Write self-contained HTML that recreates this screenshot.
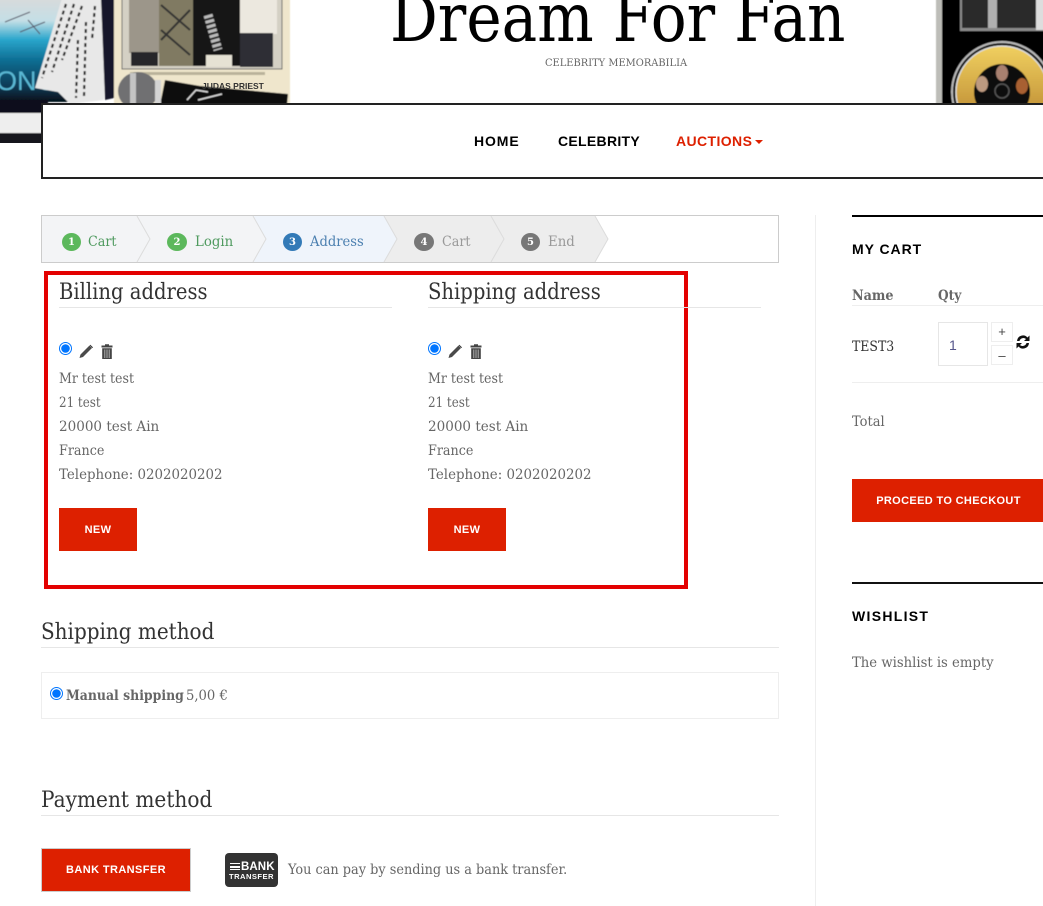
<!DOCTYPE html>
<html><head><meta charset="utf-8"><style>
html,body{margin:0;padding:0;background:#fff;}
#p{position:relative;width:1043px;height:906px;overflow:hidden;font-family:"DejaVu Serif","Liberation Serif",serif;color:#666;font-size:14px;}
.t{position:absolute;white-space:nowrap;line-height:24px;height:24px;transform:scaleX(.92);transform-origin:0 50%;margin-top:1px;}
.h{font-size:22px;color:#333;line-height:30px;height:30px;transform:scaleX(.89);margin-top:2px;}
.bd{font-weight:bold;transform:scaleX(.89);}
.s{font-family:"Liberation Sans",sans-serif;font-weight:bold;color:#000;transform:none;margin-top:0;}
.b{position:absolute;background:#dd2000;color:#fff;font:bold 11px "Liberation Sans",sans-serif;text-align:center;letter-spacing:.4px;}
.l{position:absolute;height:1px;background:#e6e6e6;}
.r{position:absolute;width:13px;height:13px;}
.c{position:absolute;border-radius:50%;width:19px;height:18px;color:#fff;font-size:10px;font-weight:bold;line-height:20px;text-align:center;}
</style></head><body><div id="p">

<svg style="position:absolute;left:0;top:0" width="1043" height="180" viewBox="0 0 1043 180">
<defs>
<linearGradient id="bl" x1="0" y1="0" x2="0" y2="1"><stop offset="0" stop-color="#d8dadb"/><stop offset=".22" stop-color="#c4dfe6"/><stop offset=".4" stop-color="#2aa6cc"/><stop offset=".6" stop-color="#0e6e93"/><stop offset=".85" stop-color="#0a3a55"/><stop offset="1" stop-color="#06101a"/></linearGradient>
<linearGradient id="gd" x1="0" y1="0" x2="0" y2="1"><stop offset="0" stop-color="#f0d060"/><stop offset="1" stop-color="#b07a28"/></linearGradient>
<filter id="bf" x="-5%" y="-5%" width="110%" height="110%"><feGaussianBlur stdDeviation=".6"/></filter>
<clipPath id="cl"><path d="M0 0 H1043 V103 H41 V143 H0 Z"/></clipPath>
</defs>
<g clip-path="url(#cl)"><g filter="url(#bf)">
<rect x="-2" y="-2" width="72" height="104" fill="url(#bl)"/>
<rect x="-2" y="100" width="50" height="14" fill="#08101a"/>
<rect x="-2" y="113" width="46" height="20" fill="#eeeeee"/>
<rect x="-2" y="133" width="46" height="14" fill="#14141c"/>
<path d="M5 22 L30 12 M20 32 L45 22 M28 20 L40 34" stroke="#556" stroke-width="1" fill="none"/>
<text x="-4" y="90" font-family="Liberation Sans,sans-serif" font-size="27" fill="#5ab8d4">ONCE</text>
<polygon points="62,-2 112,-2 104,100 70,104 58,92 35,88" fill="#e8e8e8"/>
<g stroke="#222" stroke-width="2.2" stroke-dasharray="4 3" fill="none">
<path d="M66 4 L42 78"/><path d="M74 4 L52 72"/><path d="M82 6 L62 60"/><path d="M78 40 L76 98"/><path d="M86 22 L84 96"/><path d="M95 6 L92 40"/></g>
<polygon points="101,-2 115,-2 114,98 105,100" fill="#14162a"/>
<rect x="114" y="-2" width="176" height="107" fill="#efe6cc"/>
<rect x="122" y="-2" width="160" height="71" fill="#d4d0c4" stroke="#666" stroke-width="1"/>
<rect x="129" y="-2" width="31" height="55" fill="#9c968a"/>
<rect x="131" y="52" width="27" height="14" fill="#26262a"/>
<rect x="159" y="-2" width="34" height="68" fill="#807a62"/>
<path d="M161 5 L190 30 M161 30 L190 55 M190 10 L161 40" stroke="#333" stroke-width="2"/>
<rect x="193" y="-2" width="47" height="68" fill="#121212"/>
<path d="M208 15 L218 50" stroke="#bbb" stroke-width="9" stroke-dasharray="3 2"/>
<rect x="240" y="-2" width="37" height="36" fill="#ece8df"/>
<rect x="240" y="33" width="33" height="34" fill="#2e2e34"/>
<rect x="206" y="55" width="26" height="12" fill="#e6e2d4"/>
<rect x="130" y="72" width="135" height="3" fill="#b9b29a"/>
<polygon points="165,80 200,86 288,94 287,105 160,105" fill="#111"/>
<ellipse cx="138" cy="91" rx="20" ry="19" fill="#6f6f72"/>
<rect x="130" y="73" width="6" height="32" fill="#c4c4c4"/>
<rect x="155" y="80" width="6" height="25" fill="#d4d4d4"/>
<path d="M187 100 L196 90 L208 92 M198 100 L222 94" stroke="#ddd" stroke-width="1.5" fill="none"/>
<rect x="936" y="-2" width="110" height="107" fill="#060606"/>
<rect x="936" y="-2" width="6" height="107" fill="#bdbdb8"/>
<rect x="960" y="-2" width="85" height="33" fill="#8a8a8a"/>
<rect x="962" y="-2" width="83" height="30" fill="#2a2a2a"/>
<rect x="988" y="-2" width="9" height="30" fill="#b0b0b0"/>
<rect x="1036" y="-2" width="9" height="32" fill="#ddd"/>
<circle cx="1002" cy="92" r="50" fill="#0a0a0a" stroke="#bbb" stroke-width="2"/>
<circle cx="1002" cy="92" r="46" fill="url(#gd)" stroke="#ddd" stroke-width="1.5"/>
<circle cx="1002" cy="92" r="28" fill="#0b0a0a"/>
<ellipse cx="1002" cy="73" rx="6" ry="8" fill="#a88070"/>
<ellipse cx="982" cy="84" rx="6" ry="8" fill="#bd9a80"/>
<ellipse cx="1022" cy="86" rx="6" ry="8" fill="#a86030"/>
<circle cx="1002" cy="91" r="7" fill="none" stroke="#555" stroke-width="1.5"/>
</g></g>
<text x="202" y="89" font-family="Liberation Sans,sans-serif" font-weight="bold" font-size="8.5" fill="#333">JUDAS PRIEST</text>
</svg>

<div class="t" style="left:390px;top:-28px;font-size:67px;line-height:90px;height:90px;color:#000;transform:scaleX(.89)">Dream For Fan</div>
<div class="t" style="left:545px;top:50px;font-size:10.5px;color:#666;transform:scaleX(.94)">CELEBRITY MEMORABILIA</div>

<div style="position:absolute;left:41px;top:103px;width:1100px;height:72px;border:2px solid #222;background:#fff;"></div>
<div class="t s" style="left:474px;top:129px;font-size:14px;letter-spacing:.9px">HOME</div>
<div class="t s" style="left:558px;top:129px;font-size:14px;letter-spacing:.3px">CELEBRITY</div>
<div class="t s" style="left:676px;top:129px;font-size:14px;color:#dd2000;letter-spacing:.4px">AUCTIONS</div>
<div style="position:absolute;left:755px;top:140px;border-left:4px solid transparent;border-right:4px solid transparent;border-top:4px solid #dd2000;"></div>

<svg style="position:absolute;left:41px;top:215px" width="739" height="48" viewBox="41 215 739 48">
<rect x="41.5" y="215.5" width="737" height="47" fill="#fff" stroke="#ccc"/>
<polygon points="491,216 595,216 608,239 595,262 491,262" fill="#ededed"/>
<polygon points="384,216 491,216 504,239 491,262 384,262" fill="#ededed"/>
<polygon points="253,216 384,216 397,239 384,262 253,262" fill="#eff4fb"/>
<polygon points="137,216 253,216 266,239 253,262 137,262" fill="#f3f4f6"/>
<polygon points="42,216 137,216 150,239 137,262 42,262" fill="#f3f4f6"/>
<path d="M137 216 L150 239 L137 262 M253 216 L266 239 L253 262 M384 216 L397 239 L384 262 M491 216 L504 239 L491 262 M595 216 L608 239 L595 262" fill="none" stroke="#dcdcdc"/>
</svg>
<div class="c" style="left:62px;top:233px;background:#5cb85c">1</div><div class="t" style="left:88px;top:229px;color:#4f9a5f;transform:scaleX(.91)">Cart</div>
<div class="c" style="left:167px;top:233px;width:20px;background:#5cb85c">2</div><div class="t" style="left:195px;top:229px;color:#4f9a5f;transform:scaleX(.95)">Login</div>
<div class="c" style="left:283px;top:233px;background:#337ab7">3</div><div class="t" style="left:310px;top:229px;color:#4c80b0;transform:scaleX(.936)">Address</div>
<div class="c" style="left:414px;top:233px;width:20px;background:#777">4</div><div class="t" style="left:442px;top:229px;color:#999;transform:scaleX(.91)">Cart</div>
<div class="c" style="left:521px;top:233px;background:#777">5</div><div class="t" style="left:548px;top:229px;color:#999;transform:scaleX(.95)">End</div>

<div style="position:absolute;left:44px;top:271px;width:636px;height:310px;border:4px solid #e30000;"></div>

<div class="t h" style="left:59px;top:276px">Billing address</div>
<div class="l" style="left:59px;top:307px;width:333px"></div>
<div class="t h" style="left:428px;top:276px">Shipping address</div>
<div class="l" style="left:428px;top:307px;width:333px"></div>

<svg class="r" style="left:59px;top:342px" viewBox="0 0 13 13"><circle cx="6.5" cy="6.5" r="6" fill="#fff" stroke="#0075ff" stroke-width="1"/><circle cx="6.5" cy="6.5" r="4.3" fill="#0075ff"/></svg>
<svg style="position:absolute;left:79px;top:344px" width="15" height="15" viewBox="0 0 15 15"><path d="M.5 14 L1.5 10.5 L10.5 1.5 L13 4 L4 13 Z" fill="#4a4a4a"/><path d="M11.3 .7 L14 3.4 L13.4 4 L10.7 1.3 Z" fill="#222"/></svg>
<svg style="position:absolute;left:101px;top:344px" width="12" height="15" viewBox="0 0 12 15"><path d="M4 1.5 V.3 H8 V1.5 H11.5 V3.5 H.5 V1.5 Z M1.2 4.3 H10.8 V15 H1.2 Z" fill="#444"/><path d="M3.8 5.5 V14 M6 5.5 V14 M8.2 5.5 V14" stroke="#bbb" stroke-width=".9"/></svg>
<svg class="r" style="left:428px;top:342px" viewBox="0 0 13 13"><circle cx="6.5" cy="6.5" r="6" fill="#fff" stroke="#0075ff" stroke-width="1"/><circle cx="6.5" cy="6.5" r="4.3" fill="#0075ff"/></svg>
<svg style="position:absolute;left:448px;top:344px" width="15" height="15" viewBox="0 0 15 15"><path d="M.5 14 L1.5 10.5 L10.5 1.5 L13 4 L4 13 Z" fill="#4a4a4a"/><path d="M11.3 .7 L14 3.4 L13.4 4 L10.7 1.3 Z" fill="#222"/></svg>
<svg style="position:absolute;left:470px;top:344px" width="12" height="15" viewBox="0 0 12 15"><path d="M4 1.5 V.3 H8 V1.5 H11.5 V3.5 H.5 V1.5 Z M1.2 4.3 H10.8 V15 H1.2 Z" fill="#444"/><path d="M3.8 5.5 V14 M6 5.5 V14 M8.2 5.5 V14" stroke="#bbb" stroke-width=".9"/></svg>

<div class="t" style="left:59px;top:366px;transform:scaleX(.9)">Mr test test</div>
<div class="t" style="left:59px;top:390px;transform:scaleX(.85)">21 test</div>
<div class="t" style="left:59px;top:414px;transform:scaleX(.966)">20000 test Ain</div>
<div class="t" style="left:59px;top:438px;transform:scaleX(.91)">France</div>
<div class="t" style="left:59px;top:462px;transform:scaleX(.955)">Telephone: 0202020202</div>
<div class="t" style="left:428px;top:366px;transform:scaleX(.9)">Mr test test</div>
<div class="t" style="left:428px;top:390px;transform:scaleX(.85)">21 test</div>
<div class="t" style="left:428px;top:414px;transform:scaleX(.966)">20000 test Ain</div>
<div class="t" style="left:428px;top:438px;transform:scaleX(.91)">France</div>
<div class="t" style="left:428px;top:462px;transform:scaleX(.955)">Telephone: 0202020202</div>

<div class="b" style="left:59px;top:508px;width:78px;height:43px;line-height:44px">NEW</div>
<div class="b" style="left:428px;top:508px;width:78px;height:43px;line-height:44px">NEW</div>

<div class="t h" style="left:41px;top:616px;transform:scaleX(.908)">Shipping method</div>
<div class="l" style="left:41px;top:647px;width:738px"></div>
<div style="position:absolute;left:41px;top:672px;width:736px;height:45px;border:1px solid #eee"></div>
<svg class="r" style="left:50px;top:687px" viewBox="0 0 13 13"><circle cx="6.5" cy="6.5" r="6" fill="#fff" stroke="#0075ff" stroke-width="1"/><circle cx="6.5" cy="6.5" r="4.3" fill="#0075ff"/></svg>
<div class="t bd" style="left:66px;top:683px">Manual shipping</div>
<div class="t" style="left:186px;top:683px;transform:scaleX(.94)">5,00 €</div>

<div class="t h" style="left:41px;top:784px;transform:scaleX(.914)">Payment method</div>
<div class="l" style="left:41px;top:815px;width:738px"></div>
<div class="b" style="left:41px;top:848px;width:148px;height:42px;line-height:43px;border:1px solid #ccc">BANK TRANSFER</div>
<div style="position:absolute;left:225px;top:853px;width:53px;height:34px;background:#333;border-radius:4px;color:#fff;font-family:'Liberation Sans',sans-serif;font-weight:bold">
<div style="position:absolute;left:5px;top:10px;width:10px;height:5px;border-top:1.5px solid #fff;border-bottom:1.5px solid #fff"></div>
<div style="position:absolute;left:5px;top:13px;width:10px;height:1.5px;background:#fff"></div>
<div style="position:absolute;left:16px;top:8px;font-size:11.5px;line-height:12px;letter-spacing:.1px">BANK</div>
<div style="position:absolute;left:4px;top:19px;font-size:7.6px;line-height:10px;letter-spacing:.45px">TRANSFER</div>
</div>
<div class="t" style="left:288px;top:857px;">You can pay by sending us a bank transfer.</div>

<div style="position:absolute;left:815px;top:215px;width:1px;height:691px;background:#eee"></div>
<div style="position:absolute;left:852px;top:215px;width:191px;height:2px;background:#000"></div>
<div class="t s" style="left:852px;top:237px;font-size:14px;letter-spacing:.95px">MY CART</div>
<div class="t bd" style="left:852px;top:283px;transform:scaleX(.91)">Name</div>
<div class="t bd" style="left:938px;top:283px;transform:scaleX(.87)">Qty</div>
<div class="l" style="left:852px;top:305px;width:191px;background:#eee"></div>
<div class="t" style="left:852px;top:334px;color:#333;transform:scaleX(.89)">TEST3</div>
<div style="position:absolute;left:938px;top:322px;width:48px;height:42px;border:1px solid #e6e6e6"></div>
<div class="t s" style="left:949px;top:333px;font-weight:normal;font-size:14px;color:#55558a">1</div>
<div style="position:absolute;left:991px;top:322px;width:20px;height:18px;border:1px solid #eee;font:13px/18px 'Liberation Sans',sans-serif;text-align:center;color:#444">+</div>
<div style="position:absolute;left:991px;top:345px;width:20px;height:18px;border:1px solid #eee;font:13px/20px 'Liberation Sans',sans-serif;text-align:center;color:#444">–</div>
<svg style="position:absolute;left:1015px;top:334px" width="16" height="16" viewBox="0 0 16 16"><path d="M2 7 A6 6 0 0 1 12.5 3.5 L14.5 1.5 V7 H9 L11 5 A4 4 0 0 0 4.5 7 Z M14 9 A6 6 0 0 1 3.5 12.5 L1.5 14.5 V9 H7 L5 11 A4 4 0 0 0 11.5 9 Z" fill="#111"/></svg>
<div class="l" style="left:852px;top:382px;width:191px;background:#eee"></div>
<div class="t" style="left:852px;top:409px;transform:scaleX(.93)">Total</div>
<div class="b" style="left:852px;top:479px;width:194px;height:43px;line-height:44px;letter-spacing:.35px;text-indent:-1px">PROCEED TO CHECKOUT</div>
<div style="position:absolute;left:852px;top:582px;width:191px;height:2px;background:#111"></div>
<div class="t s" style="left:852px;top:604px;font-size:14px;letter-spacing:1.3px">WISHLIST</div>
<div class="t" style="left:852px;top:650px;transform:scaleX(.943)">The wishlist is empty</div>
</div></body></html>
